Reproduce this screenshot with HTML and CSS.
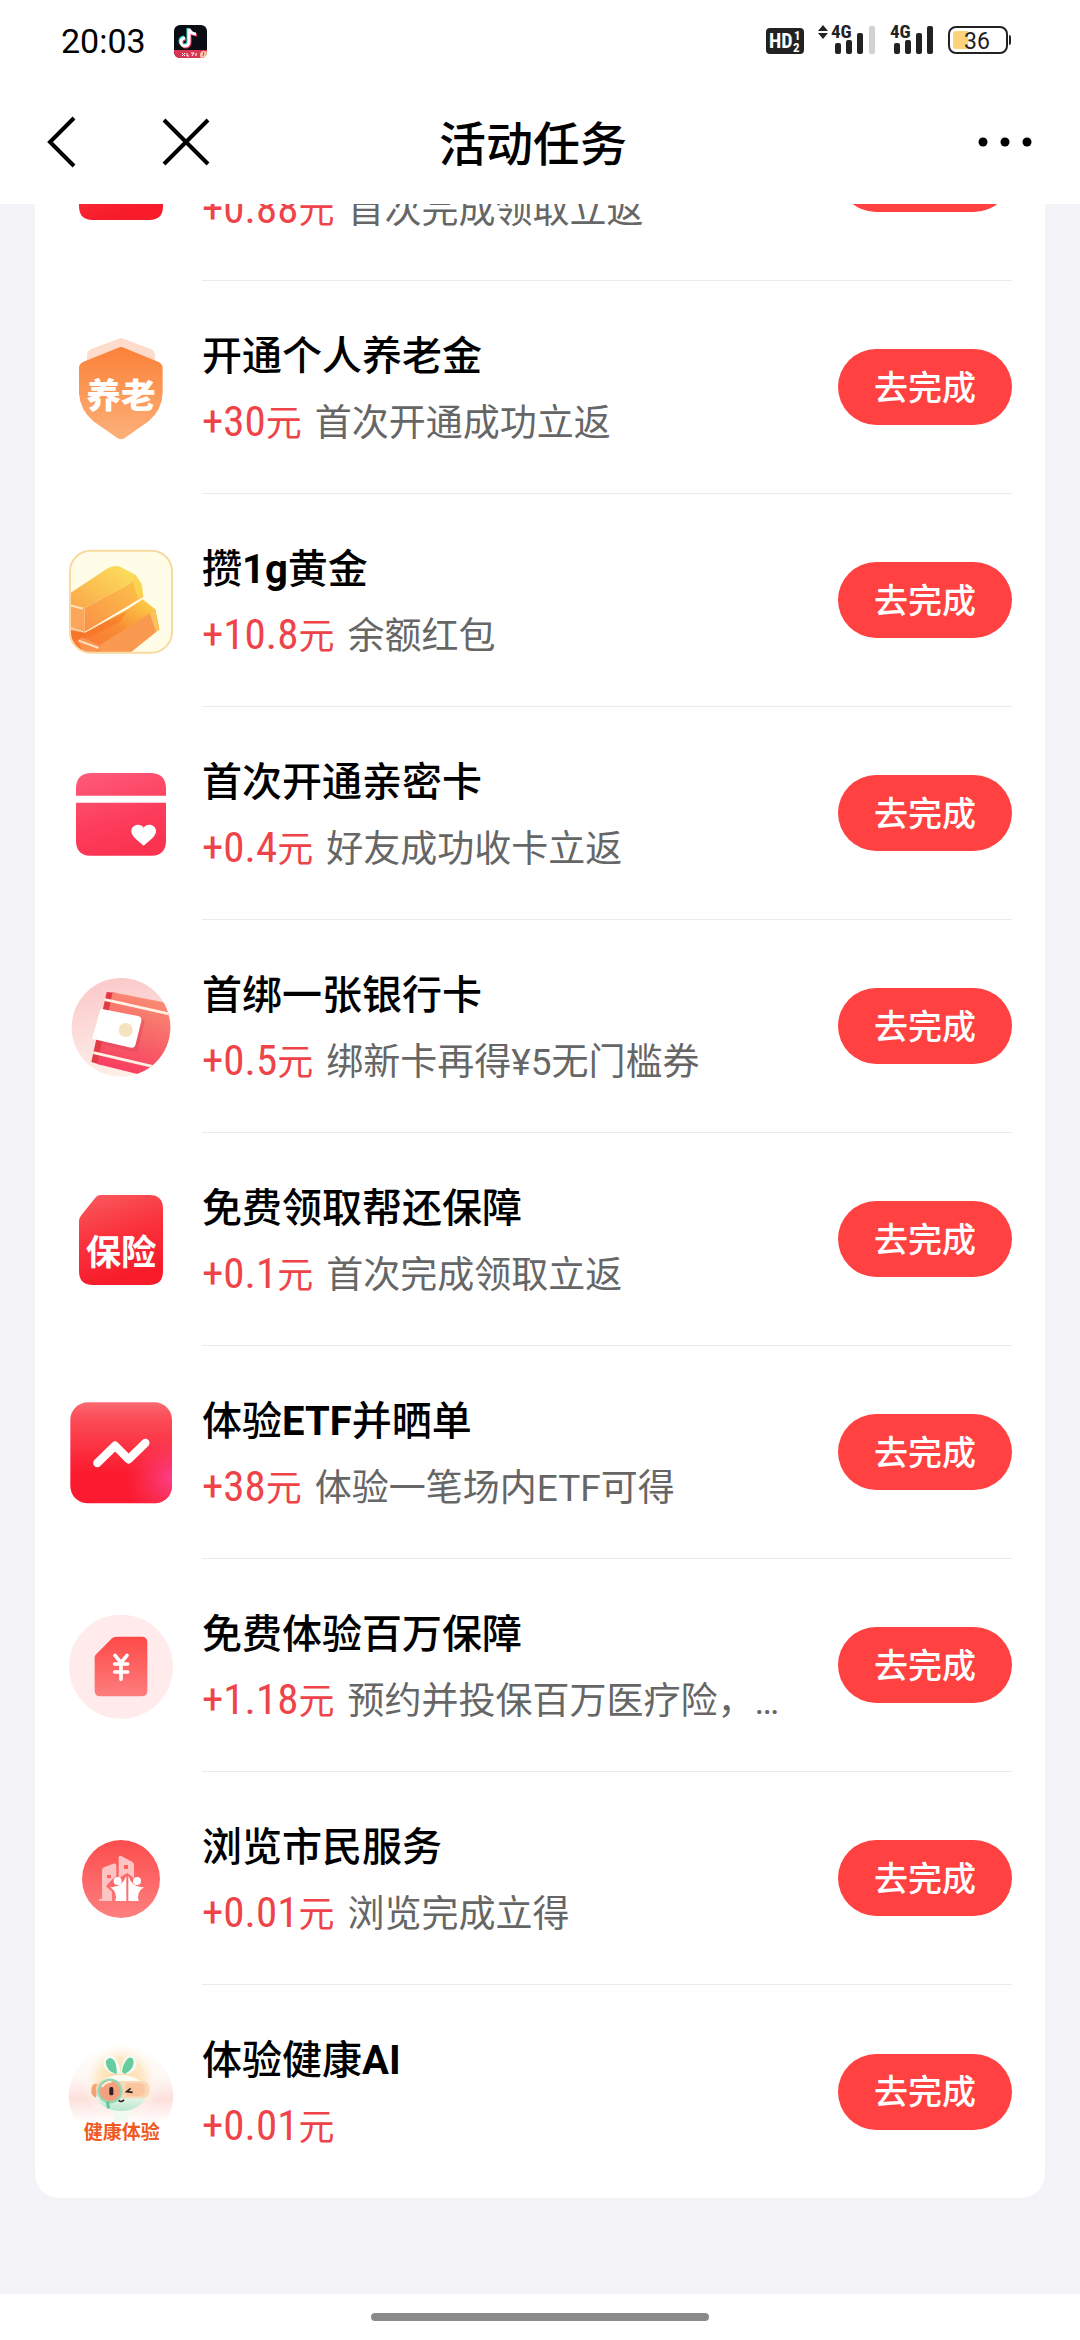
FILE: index.html
```html
<!DOCTYPE html>
<html lang="zh-CN">
<head>
<meta charset="utf-8">
<meta name="viewport" content="width=device-width, initial-scale=1">
<title>活动任务</title>
<link rel="stylesheet" href="styles.css">
</head>
<body>

<!-- shared icon, used by both insurance tasks -->
<svg class="defs" aria-hidden="true">
  <defs>
    <linearGradient id="gInsure" x1="0" y1="0" x2="0.3" y2="1">
      <stop offset="0" stop-color="#fb5b60"/><stop offset="0.5" stop-color="#f9333d"/><stop offset="1" stop-color="#f81b2a"/>
    </linearGradient>
  </defs>
  <symbol id="icon-insure" viewBox="33 0 360 360">
    <path fill="url(#gInsure)" d="M150 45H298Q339 45 339 86V274Q339 315 298 315H128Q87 315 87 274V124Q87 112 95 104L136 53Q142 45 150 45Z"/>
    <text class="icon-text" x="213" y="256" font-size="106" fill="#fff">保险</text>
  </symbol>
</svg>

<header class="header">
  <div class="status">
    <span class="status-time">20:03</span>
    <svg class="status-app" viewBox="0 0 33 33" width="33" height="33" aria-hidden="true">
      <clipPath id="cApp"><rect width="33" height="33" rx="6"/></clipPath>
      <g clip-path="url(#cApp)">
        <rect width="33" height="33" fill="#0b0d14"/>
        <g fill="none" stroke-width="3">
          <path stroke="#25e5df" d="M14 3V16A4 4 0 1 1 10 12M14 4Q16 9 21 9"/>
          <path stroke="#f5315a" d="M16 5V18A4 4 0 1 1 12 14M16 5Q18 10 23 10"/>
          <path stroke="#fff" d="M15 4V17A4 4 0 1 1 11 13M15 4Q17 9 22 9"/>
        </g>
        <rect y="25" width="33" height="8" fill="#d93555"/>
        <path d="M8 28l3 3M11 28l-3 3M13 28v3h2M17 28h3l-2 3M22 28v3" stroke="#fff" fill="none"/>
        <circle cx="30" cy="30" r="4" fill="#fbc9a8"/><path d="M30 27l-1 4" stroke="#d93555"/>
      </g>
    </svg>
    <div class="status-right">
      <svg viewBox="0 0 38 34" width="38" height="34" aria-label="HD">
        <rect y="4" width="38" height="26" rx="4" fill="#222"/>
        <text class="status-glyph" x="3" y="24" font-size="20" fill="#fff">HD</text>
        <text class="status-glyph" x="28" y="16" font-size="13" fill="#fff">1</text>
        <text class="status-glyph" x="27" y="28" font-size="13" fill="#fff">2</text>
      </svg>
      <svg viewBox="0 0 58 34" width="58" height="34" aria-label="4G">
        <path fill="#222" d="M0 7L5 1L10 7ZM0 9L5 15L10 9Z"/>
        <text class="status-glyph" x="13" y="14" font-size="19" fill="#222">4G</text>
        <g fill="#222"><rect x="17" y="19" width="6" height="11" rx="2"/><rect x="28" y="16" width="6" height="14" rx="2"/><rect x="39" y="9" width="6" height="21" rx="2"/></g>
        <rect x="51" y="2" width="6" height="28" rx="2" fill="#d2d2d2"/>
      </svg>
      <svg viewBox="0 0 44 34" width="44" height="34" aria-label="4G">
        <text class="status-glyph" x="0" y="14" font-size="19" fill="#222">4G</text>
        <g fill="#222"><rect x="4" y="19" width="6" height="11" rx="2"/><rect x="15" y="16" width="6" height="14" rx="2"/><rect x="26" y="9" width="6" height="21" rx="2"/><rect x="37" y="2" width="6" height="28" rx="2"/></g>
      </svg>
      <svg viewBox="0 0 64 34" width="64" height="34" aria-label="36%">
        <rect x="1" y="3" width="58" height="26" rx="7" fill="#fff" stroke="#222" stroke-width="2"/>
        <path d="M8 7H20V25H8Q5 25 5 22V10Q5 7 8 7Z" fill="#fdd27b"/>
        <path d="M61 11Q63 11 63 13V19Q63 21 61 21Z" fill="#222"/>
        <text class="battery-text" x="29" y="25" font-size="23">36</text>
      </svg>
    </div>
  </div>
  <nav class="nav">
    <div class="nav-left">
      <button class="nav-btn" type="button" aria-label="返回">
        <svg viewBox="0 0 56 60" width="56" height="60"><path d="M40 6L16 30L40 54" fill="none" stroke="#000" stroke-width="4"/></svg>
      </button>
      <button class="nav-btn" type="button" aria-label="关闭">
        <svg viewBox="0 0 56 60" width="56" height="60"><path d="M6 8L50 52M50 8L6 52" fill="none" stroke="#000" stroke-width="4"/></svg>
      </button>
    </div>
    <h1 class="nav-title">活动任务</h1>
    <button class="nav-btn nav-more" type="button" aria-label="更多">
      <svg viewBox="0 0 54 60" width="54" height="60"><circle cx="5" cy="30" r="4.500"/><circle cx="27" cy="30" r="4.500"/><circle cx="49" cy="30" r="4.500"/></svg>
    </button>
  </nav>
</header>

<main class="content">
  <ul class="tasks">
    <li class="task">
      <svg class="task-icon" aria-hidden="true"><use href="#icon-insure"/></svg>
      <div class="task-body">
        <div class="task-main">
          <h2 class="task-title"></h2>
          <p class="task-sub"><span class="reward"><span class="num">+0.88</span>元</span>首次完成领取立返</p>
        </div>
        <button class="task-btn" type="button">去完成</button>
      </div>
    </li>
    <li class="task">
      <svg class="task-icon" viewBox="33 54 360 360" aria-hidden="true">
        <linearGradient id="gPension" x1="0" y1="0" x2="0" y2="1"><stop offset="0" stop-color="#fb8137"/><stop offset="1" stop-color="#fcb07a"/></linearGradient>
        <path fill="#fddccb" d="M206 86Q213 82 220 86L304 118Q315 124 315 136V200H111V136Q111 124 122 118Z"/>
        <path fill="url(#gPension)" d="M203 114Q213 108 223 114L326 156Q338 162 338 174V250Q336 300 296 334L223 385Q213 391 203 385L130 334Q90 300 87 250V174Q87 162 99 156Z"/>
        <text class="icon-text icon-text-heavy" x="213" y="293" font-size="104" fill="#fff">养老</text>
      </svg>
      <div class="task-body">
        <div class="task-main">
          <h2 class="task-title">开通个人养老金</h2>
          <p class="task-sub"><span class="reward"><span class="num">+30</span>元</span>首次开通成功立返</p>
        </div>
        <button class="task-btn" type="button">去完成</button>
      </div>
    </li>
    <li class="task">
      <svg class="task-icon" viewBox="33 33 360 360" aria-hidden="true">
        <defs>
          <linearGradient id="gGoldTop" x1="1" y1="0" x2="0" y2="1"><stop offset="0" stop-color="#fbe35c"/><stop offset="1" stop-color="#fba64b"/></linearGradient>
          <linearGradient id="gGoldSide" x1="1" y1="0" x2="0" y2="1"><stop offset="0" stop-color="#fdc748"/><stop offset="1" stop-color="#fa9048"/></linearGradient>
          <linearGradient id="gGoldLow" x1="1" y1="0" x2="0" y2="1"><stop offset="0" stop-color="#fdd94a"/><stop offset="0.500" stop-color="#f98c34"/><stop offset="1" stop-color="#f97336"/></linearGradient>
          <clipPath id="cGold"><rect x="60" y="62" width="306" height="306" rx="62"/></clipPath>
        </defs>
        <rect x="60" y="62" width="306" height="306" rx="62" fill="#fffde8"/>
        <g clip-path="url(#cGold)">
          <path fill="url(#gGoldLow)" d="M60 300L105 308L235 236L278 208L316 238L328 298L240 368H60Z"/>
          <path fill="#fa9a50" d="M150 345L300 250L316 240L328 298L240 368H146Z"/>
          <path fill="#fbc45a" d="M300 250L316 240L328 298L318 306Z"/>
          <path fill="#f6691f" opacity="0.400" d="M60 290L105 308L230 245L210 275L120 320L60 330Z"/>
          <path fill="url(#gGoldTop)" d="M60 190L165 120Q190 104 210 110L256 134L242 160L104 234L60 226Z"/>
          <path fill="url(#gGoldSide)" d="M104 234L242 160L256 134L274 162L280 200L104 306Z"/>
          <path fill="#fbdd55" opacity="0.700" d="M248 152L258 136L276 164L280 196L264 206Z"/>
          <path fill="#fba659" d="M60 226L104 234V306L60 290Z"/>
          <path fill="#fb9351" d="M84 332L96 322L150 346L142 368H100Z"/>
          <path d="M60 226L98 236M86 332L146 354" fill="none" stroke="#ffe2bd" stroke-width="6"/>
        </g>
        <rect x="60" y="62" width="306" height="306" rx="62" fill="none" stroke="#f8d9a0" stroke-width="6"/>
      </svg>
      <div class="task-body">
        <div class="task-main">
          <h2 class="task-title">攒<b>1g</b>黄金</h2>
          <p class="task-sub"><span class="reward"><span class="num">+10.8</span>元</span>余额红包</p>
        </div>
        <button class="task-btn" type="button">去完成</button>
      </div>
    </li>
    <li class="task">
      <svg class="task-icon" viewBox="33 12 360 360" aria-hidden="true">
        <linearGradient id="gCard" gradientUnits="userSpaceOnUse" x1="150" y1="69" x2="220" y2="317"><stop offset="0" stop-color="#fe5877"/><stop offset="0.600" stop-color="#fd3c5b"/><stop offset="1" stop-color="#fb3250"/></linearGradient>
        <path fill="url(#gCard)" d="M78 137V112Q80 72 120 69H306Q346 72 348 112V137ZM78 158H348V275Q346 315 306 317H120Q80 315 78 275Z"/>
        <path fill="#fff" d="M281 287C268 276 244 260 244 244C244 224 270 218 281 233C292 218 318 224 318 244C318 260 294 276 281 287Z"/>
      </svg>
      <div class="task-body">
        <div class="task-main">
          <h2 class="task-title">首次开通亲密卡</h2>
          <p class="task-sub"><span class="reward"><span class="num">+0.4</span>元</span>好友成功收卡立返</p>
        </div>
        <button class="task-btn" type="button">去完成</button>
      </div>
    </li>
    <li class="task">
      <svg class="task-icon" viewBox="33 21 360 360" aria-hidden="true">
        <defs>
          <linearGradient id="gBankBg" x1="0.300" y1="0" x2="0.500" y2="1"><stop offset="0" stop-color="#fbc8ca"/><stop offset="1" stop-color="#fef0ea"/></linearGradient>
          <linearGradient id="gBank" x1="0.600" y1="0" x2="0.300" y2="1"><stop offset="0" stop-color="#fa8e75"/><stop offset="0.500" stop-color="#f76668"/><stop offset="1" stop-color="#f93a62"/></linearGradient>
          <clipPath id="cBank"><circle cx="213" cy="202" r="148"/></clipPath>
        </defs>
        <circle cx="213" cy="202" r="148" fill="url(#gBankBg)"/>
        <g clip-path="url(#cBank)">
          <path fill="#e23a45" d="M170 96L196 98L152 314L124 306Z"/>
          <path fill="url(#gBank)" d="M188 97L366 132V300L262 342L142 312Z"/>
          <path fill="none" stroke="#fff2e4" stroke-width="8" d="M164 119L190 124L366 164M130 278L156 284L310 320"/>
          <path fill="#e0475a" opacity="0.500" d="M150 240L250 268L278 178L284 182L262 276L240 274L146 250Z"/>
        </g>
        <path fill="#fff" d="M152 146L264 168Q276 171 274 182L256 256Q253 265 244 263L126 236Z"/>
        <circle cx="227" cy="210" r="21" fill="#f4e3bd"/>
      </svg>
      <div class="task-body">
        <div class="task-main">
          <h2 class="task-title">首绑一张银行卡</h2>
          <p class="task-sub"><span class="reward"><span class="num">+0.5</span>元</span>绑新卡再得¥5无门槛券</p>
        </div>
        <button class="task-btn" type="button">去完成</button>
      </div>
    </li>
    <li class="task">
      <svg class="task-icon" aria-hidden="true"><use href="#icon-insure"/></svg>
      <div class="task-body">
        <div class="task-main">
          <h2 class="task-title">免费领取帮还保障</h2>
          <p class="task-sub"><span class="reward"><span class="num">+0.1</span>元</span>首次完成领取立返</p>
        </div>
        <button class="task-btn" type="button">去完成</button>
      </div>
    </li>
    <li class="task">
      <svg class="task-icon" viewBox="33 9 360 360" aria-hidden="true">
        <defs>
          <linearGradient id="gEtf" x1="0" y1="0" x2="0" y2="1"><stop offset="0" stop-color="#fb6a70"/><stop offset="0.150" stop-color="#fb4d58"/><stop offset="0.700" stop-color="#fb1a2e"/><stop offset="1" stop-color="#fb1a30"/></linearGradient>
          <radialGradient id="gEtfGlow" cx="1" cy="0.750" r="0.450"><stop offset="0" stop-color="#fb3f8a"/><stop offset="1" stop-color="#fb3f6a" stop-opacity="0"/></radialGradient>
        </defs>
        <rect x="61" y="37" width="305" height="303" rx="52" fill="url(#gEtf)"/>
        <rect x="61" y="37" width="305" height="303" rx="52" fill="url(#gEtfGlow)"/>
        <path d="M142 219L195 167L236 208L286 159" fill="none" stroke="#fff" stroke-width="25" stroke-linecap="round" stroke-linejoin="round"/>
      </svg>
      <div class="task-body">
        <div class="task-main">
          <h2 class="task-title">体验<b>ETF</b>并晒单</h2>
          <p class="task-sub"><span class="reward"><span class="num">+38</span>元</span>体验一笔场内ETF可得</p>
        </div>
        <button class="task-btn" type="button">去完成</button>
      </div>
    </li>
    <li class="task">
      <svg class="task-icon" viewBox="33 15 360 360" aria-hidden="true">
        <linearGradient id="gYuan" x1="0" y1="0" x2="0" y2="1"><stop offset="0" stop-color="#fd4a47"/><stop offset="1" stop-color="#fd7d7d"/></linearGradient>
        <circle cx="213" cy="197" r="156" fill="#ffebec"/>
        <path fill="url(#gYuan)" d="M198 107H275Q292 107 292 124V269Q292 286 275 286H151Q134 286 134 269V170Q134 163 139 159L186 112Q191 107 198 107Z"/>
        <path d="M195 163L213 185L231 163M213 185V235M194 189H233M194 213H233" fill="none" stroke="#fff" stroke-width="11" stroke-linecap="round"/>
      </svg>
      <div class="task-body">
        <div class="task-main">
          <h2 class="task-title">免费体验百万保障</h2>
          <p class="task-sub"><span class="reward"><span class="num">+1.18</span>元</span>预约并投保百万医疗险，…</p>
        </div>
        <button class="task-btn" type="button">去完成</button>
      </div>
    </li>
    <li class="task">
      <svg class="task-icon" viewBox="33 -6 360 360" aria-hidden="true">
        <linearGradient id="gCity" x1="0" y1="0" x2="0" y2="1"><stop offset="0" stop-color="#fc4d4d"/><stop offset="1" stop-color="#fd8080"/></linearGradient>
        <circle cx="213" cy="174" r="117" fill="url(#gCity)"/>
        <g fill="#fec3c3">
          <path fill-rule="evenodd" d="M206 110Q206 102 214 105L246 122Q252 125 252 132V172L232 156L206 172ZM222 132V144H234V132Z"/>
          <path fill-rule="evenodd" d="M156 148Q156 142 162 139L190 128Q199 126 199 134V165L182 180L168 196L186 212V240H148V233H156ZM171 162V172H183V162Z"/>
        </g>
        <g fill="#fff">
          <circle cx="203" cy="180" r="12"/><circle cx="261" cy="180" r="12"/>
          <path d="M180 198Q214 202 229 164V240H196Q204 214 180 198Z"/>
          <path d="M235 164Q248 202 282 198Q258 214 266 240H235Z"/>
        </g>
      </svg>
      <div class="task-body">
        <div class="task-main">
          <h2 class="task-title">浏览市民服务</h2>
          <p class="task-sub"><span class="reward"><span class="num">+0.01</span>元</span>浏览完成立得</p>
        </div>
        <button class="task-btn" type="button">去完成</button>
      </div>
    </li>
    <li class="task">
      <svg class="task-icon" viewBox="33 3 360 360" aria-hidden="true">
        <defs>
          <radialGradient id="gSun"><stop offset="0" stop-color="#fdd79b"/><stop offset="0.600" stop-color="#feeacb"/><stop offset="1" stop-color="#fff" stop-opacity="0"/></radialGradient>
          <linearGradient id="gPink" x1="0" y1="0" x2="0" y2="1"><stop offset="0" stop-color="#fff"/><stop offset="0.400" stop-color="#fef8f5"/><stop offset="0.700" stop-color="#fce0dc"/><stop offset="1" stop-color="#fff"/></linearGradient>
          <linearGradient id="gFace" x1="0" y1="0" x2="0" y2="1"><stop offset="0" stop-color="#fffdf6"/><stop offset="0.600" stop-color="#e9f5ea"/><stop offset="1" stop-color="#b5e6cd"/></linearGradient>
        </defs>
        <path fill="url(#gPink)" d="M56 200A157 157 0 1 1 370 200Q366 250 340 275H86Q60 250 56 200Z"/>
        <circle cx="213" cy="150" r="118" fill="url(#gSun)"/>
        <path fill="#f6fdf6" d="M162 92Q170 62 192 78Q208 92 212 128H190Q158 116 162 92ZM258 92Q252 60 232 76Q214 92 212 128H236Q260 118 258 92Z"/>
        <path fill="#67cda0" d="M167 92Q178 72 192 88Q202 104 200 130Q168 120 167 92ZM251 92Q248 74 234 82Q218 98 216 122Q218 128 226 128Q252 114 251 92Z"/>
        <path fill="#f1faf1" d="M186 228H240L234 268H192Z"/>
        <ellipse cx="213" cy="186" rx="76" ry="54" fill="url(#gFace)"/>
        <path fill="#f5a375" d="M134 158Q122 164 124 184Q126 196 138 200L146 160Z"/>
        <rect x="138" y="150" width="160" height="52" rx="22" fill="#fbd8b5"/>
        <rect x="226" y="156" width="58" height="40" rx="14" fill="#fbc59f"/>
        <circle cx="180" cy="180" r="34" fill="#f69f7f" stroke="#91d8b3" stroke-width="7"/>
        <path d="M156 168Q166 152 184 152" fill="none" stroke="#fff3d8" stroke-width="6"/>
        <path d="M172 212L176 232" stroke="#5fc79c" stroke-width="9"/>
        <rect x="178" y="168" width="12" height="25" rx="5" fill="#2a2421"/>
        <path d="M242 172L230 182L248 184M206 208Q214 216 222 206" fill="none" stroke="#2a2421" stroke-width="5"/>
        <text class="icon-text" x="215" y="325" font-size="57" fill="#f05a22">健康体验</text>
      </svg>
      <div class="task-body">
        <div class="task-main">
          <h2 class="task-title">体验健康<b>AI</b></h2>
          <p class="task-sub"><span class="reward"><span class="num">+0.01</span>元</span></p>
        </div>
        <button class="task-btn" type="button">去完成</button>
      </div>
    </li>
  </ul>
</main>

<footer class="footer"><span class="home-bar"></span></footer>

</body>
</html>
```

FILE: styles.css
```css
* {
    box-sizing: border-box;
}

body {
    margin: 0;
    min-height: 100vh;
    display: flex;
    flex-direction: column;
    background: #f3f3f8;
    color: #000;
    font-family: Roboto, "Noto Sans CJK SC", sans-serif;
}

h1, h2, p, ul {
    margin: 0;
    padding: 0;
}

.defs {
    position: absolute;
    width: 0;
    height: 0;
}

/* header */
.header {
    background: #fff;
}

.status {
    height: 80px;
    display: flex;
    align-items: center;
    padding: 2px 68px 0 61px;
}

.status-time {
    font-size: 34px;
    width: 113px;
}

.status-right {
    display: flex;
    gap: 14px;
    margin-left: auto;
}

.status-right svg {
    overflow: visible;
}

.status-glyph {
    font-family: "Roboto Condensed", "Liberation Sans Narrow", Roboto, sans-serif;
    font-weight: 700;
}

.battery-text {
    font-family: Roboto, sans-serif;
    text-anchor: middle;
    fill: #222;
}

.nav {
    height: 124px;
    display: grid;
    grid-template-columns: 1fr auto 1fr;
    align-items: center;
    padding: 0 48px 0 34px;
}

.nav-left {
    display: flex;
    gap: 68px;
}

.nav-btn {
    display: block;
    padding: 0;
    border: 0;
    background: none;
}

.nav-btn svg {
    display: block;
}

.nav-more {
    justify-self: end;
}

.nav-title {
    padding-top: 6px;
    font-size: 47px;
    font-weight: 500;
    line-height: 60px;
}

/* task list */
.content {
    flex: 1;
    overflow: hidden;
    padding: 0 35px;
}

/* list is scrolled part way under the header */
.tasks {
    margin-top: -136px;
    background: #fff;
    border-radius: 24px;
    list-style: none;
}

.task {
    height: 213px;
    display: flex;
    align-items: center;
    gap: 21px;
    padding: 0 33px 0 26px;
}

.task-icon {
    flex: none;
    width: 120px;
    height: 120px;
}

.task-body {
    flex: 1;
    align-self: stretch;
    display: flex;
    align-items: center;
    justify-content: space-between;
    border-bottom: 1px solid #ebebeb;
}

.task:last-child .task-body {
    border-bottom: 0;
}

.task-main {
    padding-top: 5px;
}

.task-title {
    height: 60px;
    font-size: 40px;
    font-weight: 500;
    line-height: 60px;
}

.task-sub {
    height: 66px;
    color: #666;
    font-size: 37px;
    line-height: 68px;
    white-space: nowrap;
}

.reward {
    margin-right: 13px;
    color: #ee4449;
    font-size: 36px;
}

.num {
    font-family: "Roboto Condensed", "Liberation Sans Narrow", Roboto, sans-serif;
    font-size: 43px;
}

.task-btn {
    flex: none;
    width: 174px;
    height: 76px;
    padding: 0 0 4px;
    border: 0;
    border-radius: 38px;
    background: #ff4142;
    color: #fff;
    font-family: inherit;
    font-size: 34px;
    font-weight: 500;
}

.icon-text {
    font-family: "Noto Sans CJK SC", sans-serif;
    font-weight: 700;
    text-anchor: middle;
}

.icon-text-heavy {
    font-weight: 900;
}

/* system gesture bar */
.footer {
    height: 46px;
    display: flex;
    align-items: center;
    justify-content: center;
    background: #fff;
}

.home-bar {
    width: 338px;
    height: 8px;
    border-radius: 4px;
    background: #8a8a8a;
}
```
